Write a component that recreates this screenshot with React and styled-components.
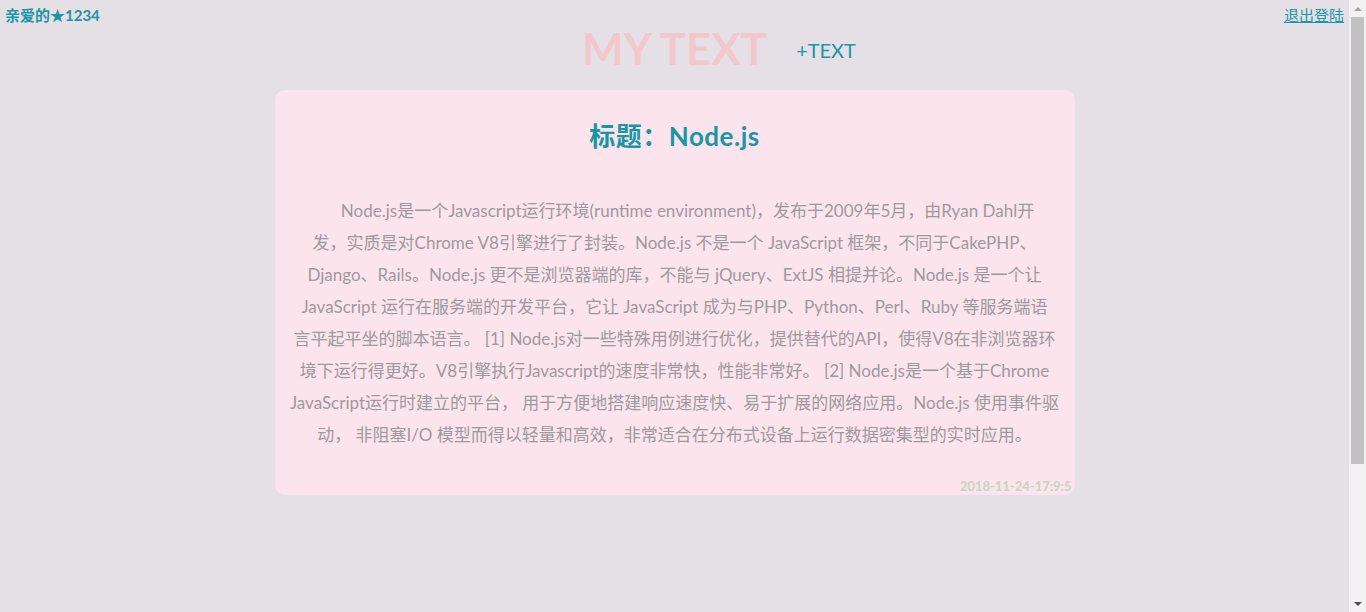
import React from 'react'
import styled, { createGlobalStyle } from 'styled-components'

const Global = createGlobalStyle`
  html, body {
    margin: 0;
    padding: 0;
    background: #e5e0e6;
    font-family: "Segoe UI", Lato, "Noto Sans CJK SC", sans-serif;
  }
`

const Shell = styled.div`
  display: flex;
  height: 100vh;
  overflow: hidden;
`

const Main = styled.div`
  flex: 1;
  min-width: 0;
`

const ScrollBar = styled.div`
  width: 17px;
  flex: none;
  background: #f1f1f1;
  display: flex;
  flex-direction: column;
  align-items: center;
`

const Arrow = styled.div`
  height: 17px;
  width: 17px;
  display: flex;
  align-items: center;
  justify-content: center;
  &::before {
    content: '';
    border-left: 4px solid transparent;
    border-right: 4px solid transparent;
    ${p => (p.$down
      ? 'border-top: 4px solid #505050;'
      : 'border-bottom: 4px solid #a3a3a3;')}
  }
`

const Thumb = styled.div`
  width: 13px;
  height: 447px;
  background: #c1c1c1;
`

const Track = styled.div`
  flex: 1;
`

const TopBar = styled.div`
  display: flex;
  justify-content: space-between;
  align-items: flex-start;
  padding: 5px 5px 0 5px;
  height: 24px;
`

const User = styled.span`
  font-size: 15px;
  font-weight: bold;
  color: #1a96a6;
  line-height: 20px;
`

const Logout = styled.a`
  font-size: 15px;
  color: #1a96a6;
  text-decoration: underline;
  line-height: 20px;
  cursor: pointer;
`

const Header = styled.div`
  display: grid;
  grid-template-columns: 1fr auto 1fr;
  align-items: center;
  height: 46px;
  margin-top: -4px;
`

const Brand = styled.h1`
  grid-column: 2;
  margin: 0;
  font-size: 44px;
  font-weight: bold;
  color: #f3c8cd;
  line-height: 46px;
`

const AddLink = styled.span`
  grid-column: 3;
  justify-self: start;
  margin-left: 29px;
  margin-top: 4px;
  font-size: 20px;
  color: #1a96a6;
`

const Card = styled.div`
  width: 800px;
  box-sizing: border-box;
  margin: 19px auto 0;
  background: #fce4ec;
  border-radius: 10px;
  padding: 26px 0 0;
  position: relative;
  height: 405px;
`

const Title = styled.h2`
  margin: 0;
  text-align: center;
  font-size: 26px;
  font-weight: bold;
  color: #1a96a6;
  line-height: 40px;
  letter-spacing: 0.5px;
`

const Body = styled.div`
  margin: 39px 0 0;
  text-align: center;
  font-size: 17px;
  line-height: 32px;
  color: #9c9a9e;
`

const Line = styled.div`
  white-space: nowrap;
  padding-left: ${p => (p.$first ? '26px' : '0')};
`

const Stamp = styled.div`
  position: absolute;
  right: 3px;
  bottom: 1px;
  font-size: 13px;
  font-weight: bold;
  color: #c5d6c6;
`

const lines = [
  'Node.js是一个Javascript运行环境(runtime environment)，发布于2009年5月，由Ryan Dahl开',
  '发，实质是对Chrome V8引擎进行了封装。Node.js 不是一个 JavaScript 框架，不同于CakePHP、',
  'Django、Rails。Node.js 更不是浏览器端的库，不能与 jQuery、ExtJS 相提并论。Node.js 是一个让',
  'JavaScript 运行在服务端的开发平台，它让 JavaScript 成为与PHP、Python、Perl、Ruby 等服务端语',
  '言平起平坐的脚本语言。 [1] Node.js对一些特殊用例进行优化，提供替代的API，使得V8在非浏览器环',
  '境下运行得更好。V8引擎执行Javascript的速度非常快，性能非常好。 [2] Node.js是一个基于Chrome',
  'JavaScript运行时建立的平台， 用于方便地搭建响应速度快、易于扩展的网络应用。Node.js 使用事件驱',
  '动， 非阻塞I/O 模型而得以轻量和高效，非常适合在分布式设备上运行数据密集型的实时应用。',
]

const App = () => {
  return (
    <Shell>
      <Global />
      <Main>
        <TopBar>
          <User>亲爱的★1234</User>
          <Logout>退出登陆</Logout>
        </TopBar>
        <Header>
          <Brand>MY TEXT</Brand>
          <AddLink>+TEXT</AddLink>
        </Header>
        <Card>
          <Title>标题：Node.js</Title>
          <Body>
            {lines.map((l, i) => (
              <Line key={i} $first={i === 0}>{l}</Line>
            ))}
          </Body>
          <Stamp>2018-11-24-17:9:5</Stamp>
        </Card>
      </Main>
      <ScrollBar>
        <Arrow />
        <Thumb />
        <Track />
        <Arrow $down />
      </ScrollBar>
    </Shell>
  )
}

export default App
